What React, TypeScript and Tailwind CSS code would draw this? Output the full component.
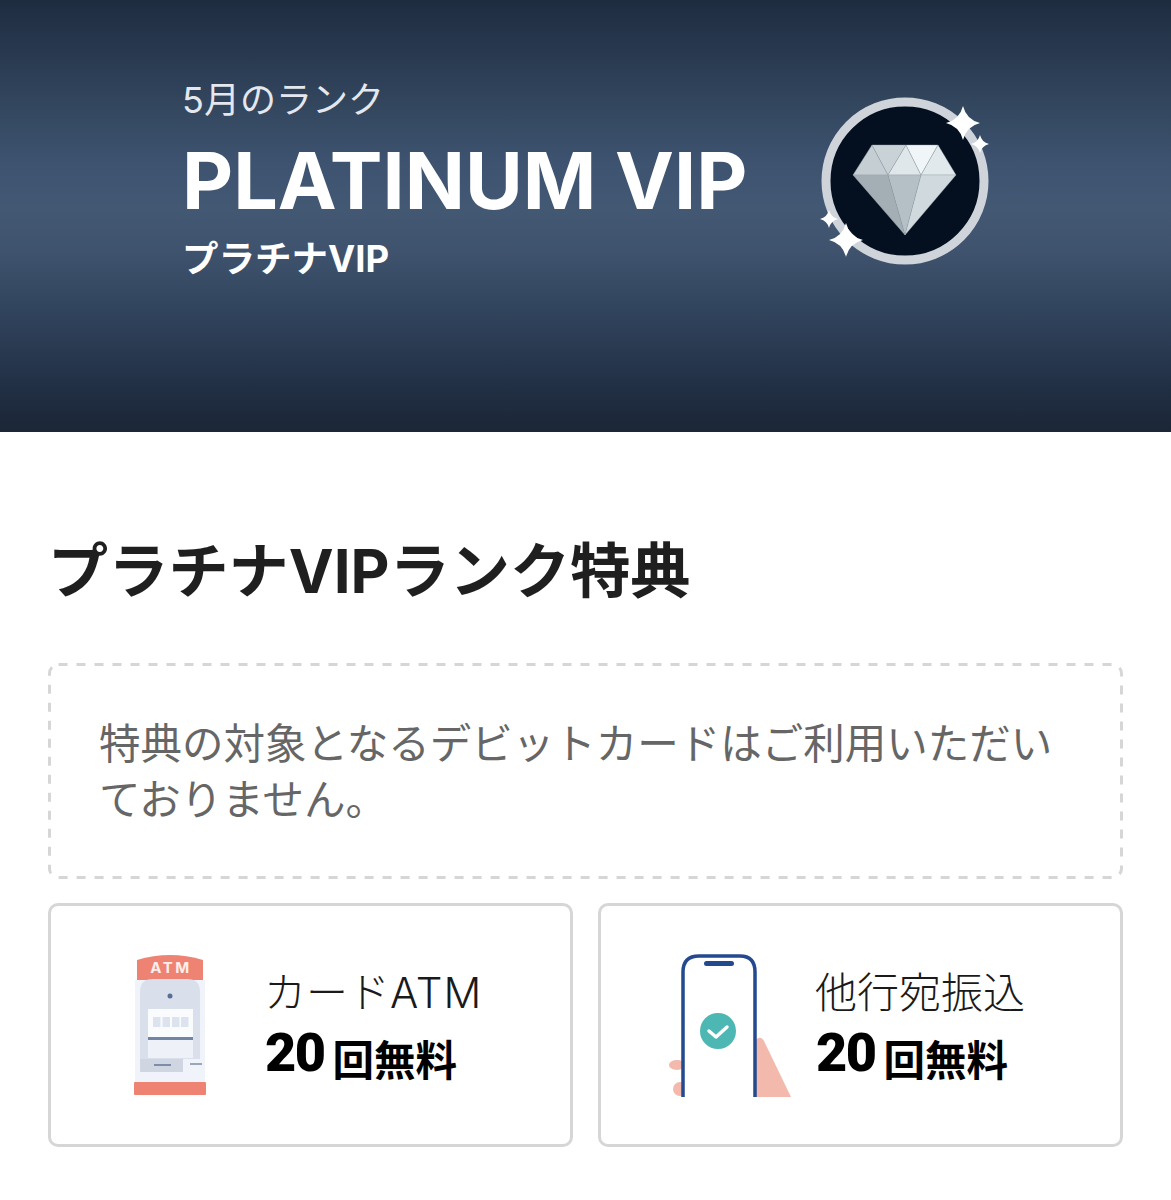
const font = "font-['Inter','Noto_Sans_CJK_JP',sans-serif]";

function Sparkle({ x, y, r }: { x: number; y: number; r: number }) {
  const k = r * 0.2;
  return (
    <path
      fill="#fff"
      d={`M${x} ${y - r}Q${x + k} ${y - k} ${x + r} ${y}Q${x + k} ${y + k} ${x} ${y + r}Q${x - k} ${y + k} ${x - r} ${y}Q${x - k} ${y - k} ${x} ${y - r}Z`}
    />
  );
}

function RankBadge() {
  return (
    <svg width="210" height="200" viewBox="0 0 210 200" className="block">
      <circle cx="105" cy="101" r="79" fill="#04101f" stroke="#cfd3da" strokeWidth="9" />
      <g stroke="#9aa5ab" strokeWidth="0.4">
        <polygon points="72,65 53,95 88,95" fill="#c5ced3" />
        <polygon points="72,65 106,65 88,95" fill="#c9d2d6" />
        <polygon points="106,65 88,95 121,95" fill="#dfe7ea" />
        <polygon points="106,65 138,65 121,95" fill="#f0f6f8" />
        <polygon points="138,65 121,95 156,95" fill="#e2e9ec" />
        <polygon points="53,95 88,95 105,155" fill="#a3aeb5" />
        <polygon points="88,95 121,95 105,155" fill="#b4c0c6" />
        <polygon points="121,95 156,95 105,155" fill="#d0d9dd" />
      </g>
      <Sparkle x={163} y={43} r={17} />
      <Sparkle x={180} y={64} r={9} />
      <Sparkle x={29} y={139} r={9} />
      <Sparkle x={46} y={160} r={17} />
    </svg>
  );
}

function AtmIcon() {
  return (
    <svg width="120" height="170" viewBox="0 0 120 170" className="block">
      <path d="M27 20Q60 10 93 20V40H27Z" fill="#ee8373" />
      <text x="61" y="33" textAnchor="middle" fontSize="15" fontWeight="700" letterSpacing="2.5" fill="#fdeee9" fontFamily="Inter, sans-serif">ATM</text>
      <rect x="25" y="40" width="70" height="102" fill="#f0f3f9" />
      <path d="M30 119V52Q30 39 43 39H77Q90 39 90 52V119Z" fill="#d9dfeb" />
      <circle cx="60" cy="56" r="2.5" fill="#5a6f96" />
      <rect x="38" y="69" width="45" height="31" fill="#fafbfd" />
      <rect x="38" y="100" width="45" height="18" fill="#eef1f7" />
      <rect x="43" y="77" width="7.5" height="10" fill="#dde3ee" />
      <rect x="52.5" y="77" width="7.5" height="10" fill="#dde3ee" />
      <rect x="62" y="77" width="7.5" height="10" fill="#dde3ee" />
      <rect x="71" y="77" width="7.5" height="10" fill="#dde3ee" />
      <rect x="38" y="97" width="45" height="3" fill="#7283a8" />
      <rect x="30" y="119" width="43" height="13" fill="#cfd6e2" />
      <rect x="44" y="124" width="17" height="2" fill="#7d8cab" />
      <rect x="80" y="123" width="12" height="2" fill="#9aa6be" />
      <rect x="24" y="142" width="72" height="13" rx="1" fill="#ee8373" />
    </svg>
  );
}

function PhoneIcon() {
  return (
    <svg width="150" height="170" viewBox="0 0 150 170" className="block">
      <path d="M104 102Q110 94 114 101L141 157H104Z" fill="#f3b9ac" />
      <ellipse cx="27" cy="125" rx="8" ry="5" fill="#f3b9ac" />
      <ellipse cx="30" cy="149" rx="7" ry="7" fill="#f3b9ac" />
      <path d="M33 157V32Q33 16 49 16H90Q105 16 105 32V157" fill="#fff" stroke="#234a8e" strokeWidth="3.5" />
      <rect x="54" y="21" width="30" height="5" rx="2.5" fill="#234a8e" />
      <circle cx="68" cy="91" r="18" fill="#4db7b3" />
      <path d="M59 91L66 97L77 87" fill="none" stroke="#fff" strokeWidth="3.5" strokeLinecap="round" strokeLinejoin="round" />
    </svg>
  );
}

function BenefitCard({ icon, title }: { icon: React.ReactNode; title: React.ReactNode }) {
  return (
    <div className="flex h-[244px] items-center rounded-[10px] border-[3px] border-[#d6d6d6]">
      {icon}
      <div className="flex flex-col">
        <span className="text-[42px] leading-[52px] font-light text-[#1a1a1a]">{title}</span>
        <span className="mt-[6px] flex items-baseline pl-[1px] font-bold text-black">
          <span className="font-['Roboto'] text-[54px] leading-[56px] font-black tracking-[-1.5px]">20</span>
          <span className="ml-[8px] translate-y-[5px] text-[41.5px] leading-[56px]">回無料</span>
        </span>
      </div>
    </div>
  );
}

export default function App() {
  return (
    <div className={`${font} min-h-[1200px] bg-white`}>
      <header className="flex h-[432px] items-start bg-[linear-gradient(180deg,#1e2c40_0%,#33475f_25%,#3e5370_38%,#435873_48%,#3f536e_58%,#31445d_72%,#212f44_90%,#1b2636_100%)] pl-[182px]">
        <div className="flex w-[618px] flex-col pt-[76px] text-white">
          <span className="text-[36px] leading-[48px] font-normal text-[#e4e8ee]">5月のランク</span>
          <span className="mt-[6px] text-[79px] leading-[100px] font-bold whitespace-nowrap">PLATINUM VIP</span>
          <span className="mt-[6px] text-[36.5px] leading-[46px] font-bold">プラチナVIP</span>
        </div>
        <div className="mt-[80px]">
          <RankBadge />
        </div>
      </header>
      <main className="px-[48px] pt-[102px]">
        <h1 className="text-[60.2px] leading-[76px] font-bold text-[#1f1f1f]">プラチナVIPランク特典</h1>
        <div className="relative mt-[53px] h-[216px] px-[51px] pt-[53px]">
          <svg className="absolute inset-0 h-full w-full">
            <rect x="1.5" y="1.5" width="1072" height="213" rx="9" fill="none" stroke="#d6d6d6" strokeWidth="3" strokeDasharray="9 9" />
          </svg>
          <p className="text-[41.5px] leading-[56px] font-normal text-[#666]">特典の対象となるデビットカードはご利用いただいておりません。</p>
        </div>
        <div className="mt-[24px] grid grid-cols-2 gap-[25px]">
          <BenefitCard icon={<div className="mr-[34px] ml-[59px]"><AtmIcon /></div>} title={<>カード<span className="tracking-[1px]">ATM</span></>} />
          <BenefitCard icon={<div className="mr-[15px] ml-[49px]"><PhoneIcon /></div>} title="他行宛振込" />
        </div>
      </main>
    </div>
  );
}
